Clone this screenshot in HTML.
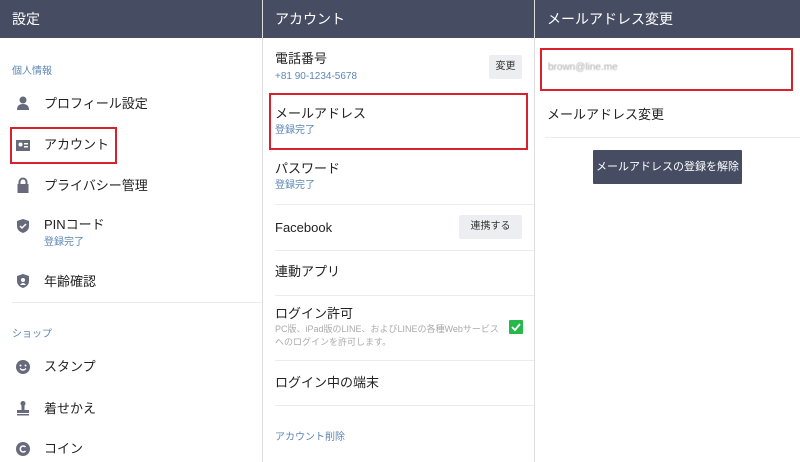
<!DOCTYPE html>
<html><head><meta charset="utf-8"><style>
*{margin:0;padding:0;box-sizing:border-box}
body{width:800px;height:462px;position:relative;background:#fff;font-family:"Liberation Sans","Noto Sans CJK JP",sans-serif;color:#222;overflow:hidden}
.a{position:absolute;white-space:nowrap}
.hd{position:absolute;top:0;height:38px;background:#464d62;color:#fff;font-size:14px;line-height:38px;padding-left:12px}
.t{font-size:13px;line-height:16px}
.s{font-size:10px;color:#5c86b5;line-height:12px}
.ln{position:absolute;height:1px;background:#ececec}
.rb{position:absolute;border:2px solid #d8212b}
.btn{position:absolute;background:#eceef1;border-radius:2px;font-size:10px;text-align:center;color:#333}
</style></head><body>
<div class="hd" style="left:0;width:262px">設定</div>
<div class="hd" style="left:263px;width:271px">アカウント</div>
<div class="hd" style="left:535px;width:265px">メールアドレス変更</div>
<div style="position:absolute;left:262px;top:0;width:1px;height:462px;background:#ddd"></div>
<div style="position:absolute;left:534px;top:0;width:1px;height:462px;background:#ddd"></div>

<div class="a s" style="left:12px;top:66px">個人情報</div>
<svg class="a" style="left:15px;top:95px" width="16" height="16"><circle cx="8" cy="5" r="3.5" fill="#666a7a"/><path d="M2 15 Q2 9 8 9 Q14 9 14 15Z" fill="#666a7a"/></svg>
<div class="a t" style="left:44px;top:96px">プロフィール設定</div>
<svg class="a" style="left:15px;top:137px" width="16" height="16"><rect x="1" y="3" width="14" height="11" fill="#666a7a"/><circle cx="5.5" cy="7.5" r="2" fill="#fff"/><rect x="9" y="6" width="4" height="1.5" fill="#fff"/><rect x="9" y="9" width="4" height="1.5" fill="#fff"/></svg>
<div class="a t" style="left:44px;top:137px">アカウント</div>
<div class="rb" style="left:10px;top:127px;width:107px;height:37px"></div>
<svg class="a" style="left:15px;top:177px" width="16" height="16"><path d="M4.5 7V5a3.5 3.5 0 0 1 7 0v2" stroke="#666a7a" stroke-width="2" fill="none"/><rect x="2.5" y="7" width="11" height="9" fill="#666a7a"/></svg>
<div class="a t" style="left:44px;top:178px">プライバシー管理</div>
<svg class="a" style="left:15px;top:218px" width="16" height="16"><path d="M8 1L14 3V8Q14 13 8 15Q2 13 2 8V3Z" fill="#666a7a"/><path d="M5 8l2 2 4-4" stroke="#fff" stroke-width="1.5" fill="none"/></svg>
<div class="a t" style="left:44px;top:217px">PINコード</div>
<div class="a s" style="left:44px;top:237px">登録完了</div>
<svg class="a" style="left:15px;top:273px" width="16" height="16"><path d="M8 1L14 3V8Q14 13 8 15Q2 13 2 8V3Z" fill="#666a7a"/><circle cx="8" cy="7" r="2" fill="#fff"/><path d="M5 12Q8 8 11 12" fill="#fff"/></svg>
<div class="a t" style="left:44px;top:274px">年齢確認</div>
<div class="ln" style="left:12px;top:302px;width:250px"></div>
<div class="a s" style="left:12px;top:329px">ショップ</div>
<svg class="a" style="left:15px;top:359px" width="16" height="16"><circle cx="8" cy="8" r="7" fill="#666a7a"/><circle cx="5.5" cy="6.5" r="1" fill="#fff"/><circle cx="10.5" cy="6.5" r="1" fill="#fff"/><path d="M5 9.5Q8 12.5 11 9.5" stroke="#fff" fill="none" stroke-width="1.3"/></svg>
<div class="a t" style="left:44px;top:359px">スタンプ</div>
<svg class="a" style="left:15px;top:400px" width="16" height="16"><circle cx="8" cy="3.5" r="2.5" fill="#666a7a"/><rect x="6.5" y="5" width="3" height="5" fill="#666a7a"/><rect x="2" y="10" width="12" height="3" fill="#666a7a"/><rect x="2" y="14" width="12" height="1.5" fill="#666a7a"/></svg>
<div class="a t" style="left:44px;top:401px">着せかえ</div>
<svg class="a" style="left:15px;top:441px" width="16" height="16"><circle cx="8" cy="8" r="7" fill="#666a7a"/><path d="M10.5 6A3 3 0 1 0 10.5 10" stroke="#fff" stroke-width="1.6" fill="none"/></svg>
<div class="a t" style="left:44px;top:441px">コイン</div>

<div class="a t" style="left:275px;top:51px">電話番号</div>
<div class="a s" style="left:275px;top:71px;color:#5c86b5">+81 90-1234-5678</div>
<div class="btn" style="left:489px;top:55px;width:33px;height:24px;line-height:24px">変更</div>
<div class="a t" style="left:275px;top:106px">メールアドレス</div>
<div class="a s" style="left:275px;top:125px">登録完了</div>
<div class="rb" style="left:269px;top:93px;width:259px;height:57px"></div>
<div class="a t" style="left:275px;top:161px">パスワード</div>
<div class="a s" style="left:275px;top:180px">登録完了</div>
<div class="ln" style="left:275px;top:204px;width:259px"></div>
<div class="a t" style="left:275px;top:220px">Facebook</div>
<div class="btn" style="left:459px;top:215px;width:63px;height:24px;line-height:24px">連携する</div>
<div class="ln" style="left:275px;top:250px;width:259px"></div>
<div class="a t" style="left:275px;top:264px">連動アプリ</div>
<div class="ln" style="left:275px;top:295px;width:259px"></div>
<div class="a t" style="left:275px;top:306px">ログイン許可</div>
<div class="a" style="left:275px;top:323px;font-size:9px;color:#aaa;line-height:13px">PC版、iPad版のLINE、およびLINEの各種Webサービス<br>へのログインを許可します。</div>
<div class="a" style="left:509px;top:320px;width:14px;height:14px;background:#27b84a;border-radius:1px"><svg width="14" height="14" style="position:absolute;left:0;top:0"><path d="M3 7l3 3 5-6" stroke="#fff" stroke-width="1.8" fill="none"/></svg></div>
<div class="ln" style="left:275px;top:360px;width:259px"></div>
<div class="a t" style="left:275px;top:375px">ログイン中の端末</div>
<div class="ln" style="left:275px;top:405px;width:259px"></div>
<div class="a s" style="left:275px;top:432px">アカウント削除</div>

<div class="rb" style="left:540px;top:48px;width:253px;height:43px"></div>
<div class="a" style="left:548px;top:62px;font-size:10px;color:#a8a8a8;filter:blur(0.6px)">brown@line.me</div>
<div class="a t" style="left:547px;top:107px">メールアドレス変更</div>
<div class="ln" style="left:545px;top:137px;width:255px"></div>
<div class="a" style="left:593px;top:150px;width:149px;height:34px;background:#464d62;color:#fff;font-size:11px;line-height:34px;text-align:center;border-radius:1px">メールアドレスの登録を解除</div>
</body></html>
